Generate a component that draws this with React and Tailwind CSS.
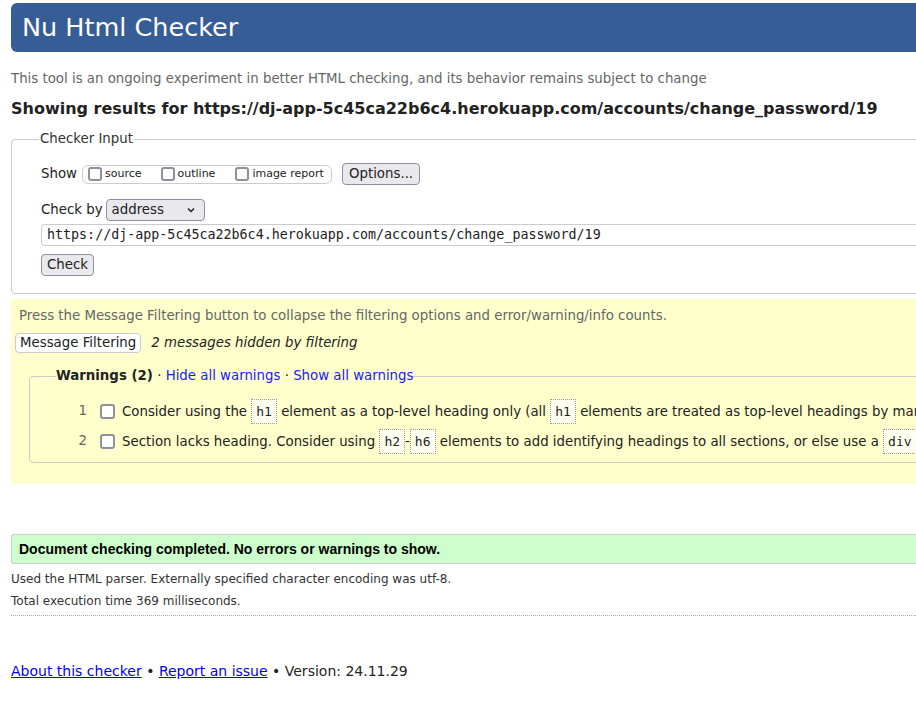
import React from "react";

function Box({ big }) {
  return big ? (
    <span className="inline-block w-[15px] h-[15px] border-2 border-[#8f8f9d] rounded-[3px] bg-white shrink-0" />
  ) : (
    <span className="inline-block w-[14px] h-[14px] border-2 border-[#8f8f9d] rounded-[3px] bg-white shrink-0" />
  );
}

function Code({ children }) {
  return (
    <code className="inline-block border border-dotted border-[#999] px-[4px] leading-[23px] font-['DejaVu_Sans_Mono',monospace] text-[13px] bg-[#fffff0]">
      {children}
    </code>
  );
}

function App() {
  return (
    <div className="w-[916px] h-[707px] overflow-hidden bg-white text-[#222] font-['DejaVu_Sans',sans-serif]">
      <div className="w-[1300px] pl-[11px]">
        {/* header */}
        <div className="mt-[3px] h-[49px] bg-[#365d95] rounded-l-md flex items-center pl-[11px]">
          <h1 className="text-white text-[25.5px]">Nu Html Checker</h1>
        </div>

        <p className="mt-[17px] leading-5 text-[13.33px] text-[#666]">
          This tool is an ongoing experiment in better HTML checking, and its behavior remains subject to change
        </p>
        <h2 className="mt-[8px] leading-6 text-[16px] font-bold text-[#222]">
          Showing results for https://dj-app-5c45ca22b6c4.herokuapp.com/accounts/change_password/19
        </h2>

        {/* checker input */}
        <fieldset className="mt-[8px] border border-[#ccc] rounded-[4px] pb-[17px]">
          <legend className="ml-[27px] px-[1px] leading-5 text-[13.33px] text-[#333]">Checker Input</legend>
          <div className="pl-[29px]">
            <div className="mt-[14px] flex items-center h-[22px] text-[13.33px]">
              <span>Show</span>
              <div className="ml-[5px] h-[19px] w-[250px] border border-[#ccc] rounded-md flex items-center pl-[5px] text-[11px]">
                <Box />
                <span className="ml-[3px]">source</span>
                <span className="ml-[19px] flex"><Box /></span>
                <span className="ml-[3px]">outline</span>
                <span className="ml-[20px] flex"><Box /></span>
                <span className="ml-[3px]">image report</span>
              </div>
              <button className="ml-[10px] h-[22px] px-[6px] bg-[#e9e9ed] border border-[#8f8f9d] rounded-[4px] text-[13.33px]">
                Options...
              </button>
            </div>
            <div className="mt-[14px] flex items-center h-[22px] text-[13.33px]">
              <span>Check by</span>
              <div className="ml-[3px] w-[99px] h-[22px] bg-[#e9e9ed] border border-[#8f8f9d] rounded-[4px] flex items-center justify-between pl-[5px] pr-[8px]">
                <span>address</span>
                <svg width="10" height="10" viewBox="0 0 10 10">
                  <path d="M2 3.5 L5 6.5 L8 3.5" fill="none" stroke="#222" strokeWidth="1.5" />
                </svg>
              </div>
            </div>
            <div className="mt-[3px] h-[22px] border border-[#ccc] rounded-l-[4px] border-r-0 flex items-center pl-[5px] font-['DejaVu_Sans_Mono',monospace] text-[13.33px] text-[#222]">
              https://dj-app-5c45ca22b6c4.herokuapp.com/accounts/change_password/19
            </div>
            <button className="mt-[8px] h-[22px] px-[5px] bg-[#e9e9ed] border border-[#8f8f9d] rounded-[4px] text-[13.33px]">
              Check
            </button>
          </div>
        </fieldset>

        {/* message filtering */}
        <div className="mt-[5px] bg-[#ffffcc] pt-[7px] pb-[21px] pl-[4px]">
          <p className="leading-5 text-[13.33px] text-[#666] pl-[4px]">
            Press the Message Filtering button to collapse the filtering options and error/warning/info counts.
          </p>
          <div className="mt-[7px] flex items-center h-[20px]">
            <button className="h-[20px] px-[4px] bg-white border border-[#ccc] rounded-[4px] text-[13.33px] leading-none">
              Message Filtering
            </button>
            <span className="ml-[10px] italic text-[13.33px]">2 messages hidden by filtering</span>
          </div>
          <fieldset className="mt-[13px] ml-[14px] border border-[#ccc] rounded-[4px] pt-[10px] pb-[6px]">
            <legend className="ml-[26px] leading-5 text-[13.33px]">
              <b>Warnings (2)</b> · <span className="text-[#1a1aff]">Hide all warnings</span> ·{" "}
              <span className="text-[#1a1aff]">Show all warnings</span>
            </legend>
            <ol className="text-[13.33px]">
              <li className="h-[30px] flex items-center">
                <span className="w-[57px] text-right text-[#666]">1</span>
                <span className="ml-[13px] flex"><Box big /></span>
                <span className="ml-[7px] whitespace-nowrap">
                  Consider using the <Code>h1</Code> element as a top-level heading only (all <Code>h1</Code> elements are treated as top-level headings by many screen readers and other tools).
                </span>
              </li>
              <li className="h-[30px] flex items-center">
                <span className="w-[57px] text-right text-[#666]">2</span>
                <span className="ml-[13px] flex"><Box big /></span>
                <span className="ml-[7px] whitespace-nowrap">
                  Section lacks heading. Consider using <Code>h2</Code>-<Code>h6</Code> elements to add identifying headings to all sections, or else use a <Code>div</Code> element instead for any cases where no heading is needed.
                </span>
              </li>
            </ol>
          </fieldset>
        </div>

        {/* result */}
        <div className="mt-[50px] h-[30px] bg-[#ccffcc] border border-r-0 border-[#ccc] rounded-l-[3px] flex items-center pl-[7px] font-['Liberation_Sans',Arial,sans-serif] font-bold text-[14px] text-black">
          Document checking completed. No errors or warnings to show.
        </div>
        <p className="mt-[4px] leading-[22px] text-[12px] text-[#333]">
          Used the HTML parser. Externally specified character encoding was utf-8.
        </p>
        <p className="leading-[22px] text-[12px] text-[#333]">Total execution time 369 milliseconds.</p>
        <div className="mt-[3px] border-t border-dotted border-[#aaa]" />

        <p className="mt-[45px] leading-5 text-[14px] text-[#222]">
          <a className="text-[#0000ee] underline">About this checker</a> •{" "}
          <a className="text-[#0000ee] underline">Report an issue</a> • Version: 24.11.29
        </p>
      </div>
    </div>
  );
}

export default App;
